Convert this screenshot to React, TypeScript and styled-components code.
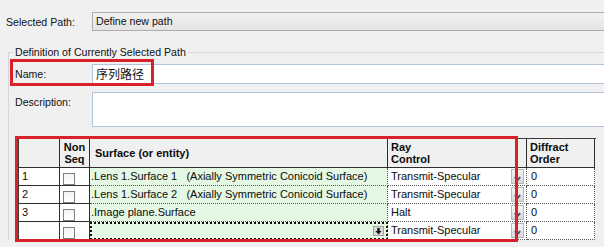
import React from "react";
import styled, { createGlobalStyle } from "styled-components";

const GlobalStyle = createGlobalStyle`
  html, body {
    margin: 0;
    padding: 0;
    background: #ffffff;
  }
`;

const Window = styled.div`
  position: relative;
  width: 604px;
  height: 247px;
  overflow: hidden;
  background: #f0f0f0;
  font-family: "Liberation Sans", Arial, sans-serif;
  font-size: 10.6px;
  color: #101010;
`;

const PathRow = styled.div`
  display: flex;
  align-items: center;
  padding: 12px 0 0 6px;
`;

const FieldLabel = styled.div<{ $width: number; $top?: boolean }>`
  flex: none;
  width: ${(p) => p.$width}px;
  line-height: 14px;
  align-self: ${(p) => (p.$top ? "flex-start" : "center")};
  padding-top: ${(p) => (p.$top ? "3px" : "0")};
`;

const Combo = styled.div`
  flex: 1;
  height: 19px;
  box-sizing: border-box;
  border: 1px solid #adadad;
  border-right: none;
  background: linear-gradient(#f1f1f1, #e4e4e4);
  padding-left: 3px;
  line-height: 17px;
`;

const Group = styled.fieldset`
  margin: 14px -6px 0 8px;
  padding: 0;
  min-width: 0;
  border: 1px solid #d6d6d6;
  border-bottom: none;
`;

const Legend = styled.legend`
  margin-left: 4px;
  padding: 0 2px;
  line-height: 14px;
`;

const GroupBody = styled.div`
  padding: 5px 0 0 6px;
`;

const FieldRow = styled.div<{ $gap?: number }>`
  display: flex;
  margin-top: ${(p) => p.$gap ?? 0}px;
`;

const TextBox = styled.div<{ $height: number }>`
  flex: 1;
  height: ${(p) => p.$height}px;
  box-sizing: border-box;
  border: 1px solid #b3c4d7;
  border-right: none;
  background: #ffffff;
  padding-left: 3px;
  font-family: "Noto Sans CJK SC", "Liberation Sans", sans-serif;
  font-size: 12px;
  line-height: 18px;
  color: #111;
`;

const Grid = styled.div`
  display: grid;
  grid-template-columns: 41px 30px 298px 139px 68px;
  grid-auto-rows: 18px;
  grid-template-rows: 29px;
  width: 577px;
  margin: 11px 0 0 3px;
  border-top: 1px solid #3a3a3a;
  border-left: 1px solid #3a3a3a;
  font-size: 11px;
  color: #0c0c0c;
`;

const HeadCell = styled.div<{ $center?: boolean; $pad?: number }>`
  display: flex;
  align-items: center;
  justify-content: ${(p) => (p.$center ? "center" : "flex-start")};
  text-align: ${(p) => (p.$center ? "center" : "left")};
  padding-left: ${(p) => p.$pad ?? 0}px;
  border-right: 1px solid #2e2e2e;
  border-bottom: 1px solid #2e2e2e;
  font-weight: 700;
  line-height: 12.5px;
`;

const RowHead = styled.div`
  border-right: 1px solid #2e2e2e;
  border-bottom: 1px solid #2e2e2e;
  background: #ffffff;
  padding-left: 3px;
  line-height: 17px;
`;

const CheckCell = styled.div`
  display: flex;
  align-items: flex-end;
  padding-left: 3px;
  border-right: 1px solid #2e2e2e;
  border-bottom: 1px solid #2e2e2e;
  background: #ffffff;
`;

const CheckBox = styled.div`
  width: 12px;
  height: 12px;
  box-sizing: border-box;
  border: 1px solid #7f8080;
  background: linear-gradient(#f4f4f4, #ffffff);
`;

const DataCell = styled.div<{ $tint?: boolean; $focus?: boolean; $pad: number }>`
  position: relative;
  display: flex;
  align-items: center;
  padding-left: ${(p) => p.$pad}px;
  border-right: 1px dotted #5a5a5a;
  border-bottom: 1px dotted #5a5a5a;
  background: ${(p) => (p.$tint ? "#e4f8e4" : "#ffffff")};
  outline: ${(p) => (p.$focus ? "2px dotted #111" : "none")};
  outline-offset: -2px;
  line-height: 17px;
  white-space: pre;
`;

const CellText = styled.span`
  flex: 1;
`;

const DropButton = styled.div`
  width: 13px;
  height: 15px;
  margin-right: 2px;
  box-sizing: border-box;
  border: 1px solid #b8b8b8;
  background: linear-gradient(#f7f7f7, #d6d6d6);
  display: flex;
`;

const PickIcon = styled.div`
  width: 11px;
  height: 10px;
  margin-right: 3px;
  display: flex;
`;

const Callout = styled.div<{ $x: number; $y: number; $w: number; $h: number }>`
  position: absolute;
  left: ${(p) => p.$x}px;
  top: ${(p) => p.$y}px;
  width: ${(p) => p.$w}px;
  height: ${(p) => p.$h}px;
  box-sizing: border-box;
  border: 3px solid #d7222b;
  pointer-events: none;
`;

const Arrow = () => (
  <svg width="11" height="13" viewBox="0 0 11 13">
    <path d="M2.8 7.2 L5.5 10.2 L8.2 7.2" fill="none" stroke="#3d5278" strokeWidth="1.9" />
  </svg>
);

const Pick = () => (
  <svg width="11" height="10" viewBox="0 0 11 10">
    <rect x="0.5" y="0.5" width="10" height="9" fill="#d9d9d9" stroke="#a0a0a0" />
    <path d="M4.3 2 H6.7 V5 H8.5 L5.5 8.5 L2.5 5 H4.3 Z" fill="#111" />
  </svg>
);

type Row = {
  id: string;
  surface: string;
  control: string;
  order: string;
};

const rows: Array<Row> = [
  { id: "1", surface: ".Lens 1.Surface 1   (Axially Symmetric Conicoid Surface)", control: "Transmit-Specular", order: "0" },
  { id: "2", surface: ".Lens 1.Surface 2   (Axially Symmetric Conicoid Surface)", control: "Transmit-Specular", order: "0" },
  { id: "3", surface: ".Image plane.Surface", control: "Halt", order: "0" },
  { id: "", surface: "", control: "Transmit-Specular", order: "0" },
];

export default function App() {
  return (
    <Window>
      <GlobalStyle />
      <PathRow>
        <FieldLabel $width={86}>Selected Path:</FieldLabel>
        <Combo>Define new path</Combo>
      </PathRow>

      <Group>
        <Legend>Definition of Currently Selected Path</Legend>
        <GroupBody>
          <FieldRow>
            <FieldLabel $width={77}>Name:</FieldLabel>
            <TextBox $height={20}>序列路径</TextBox>
          </FieldRow>
          <FieldRow $gap={8}>
            <FieldLabel $width={77} $top>
              Description:
            </FieldLabel>
            <TextBox $height={35} />
          </FieldRow>

          <Grid>
            <HeadCell />
            <HeadCell $center>
              Non
              <br />
              Seq
            </HeadCell>
            <HeadCell $pad={5}>Surface (or entity)</HeadCell>
            <HeadCell $pad={3}>
              Ray
              <br />
              Control
            </HeadCell>
            <HeadCell $pad={3}>
              Diffract
              <br />
              Order
            </HeadCell>

            {rows.map((row, i) => {
              const last = i === rows.length - 1;
              return (
                <React.Fragment key={i}>
                  <RowHead>{row.id}</RowHead>
                  <CheckCell>
                    <CheckBox />
                  </CheckCell>
                  <DataCell $tint $focus={last} $pad={1}>
                    <CellText>{row.surface}</CellText>
                    {last && (
                      <PickIcon>
                        <Pick />
                      </PickIcon>
                    )}
                  </DataCell>
                  <DataCell $pad={3}>
                    <CellText>{row.control}</CellText>
                    <DropButton>
                      <Arrow />
                    </DropButton>
                  </DataCell>
                  <DataCell $pad={4}>{row.order}</DataCell>
                </React.Fragment>
              );
            })}
          </Grid>
        </GroupBody>
      </Group>

      <Callout $x={10} $y={59} $w={144} $h={27} />
      <Callout $x={15} $y={136} $w={503} $h={106} />
    </Window>
  );
}
